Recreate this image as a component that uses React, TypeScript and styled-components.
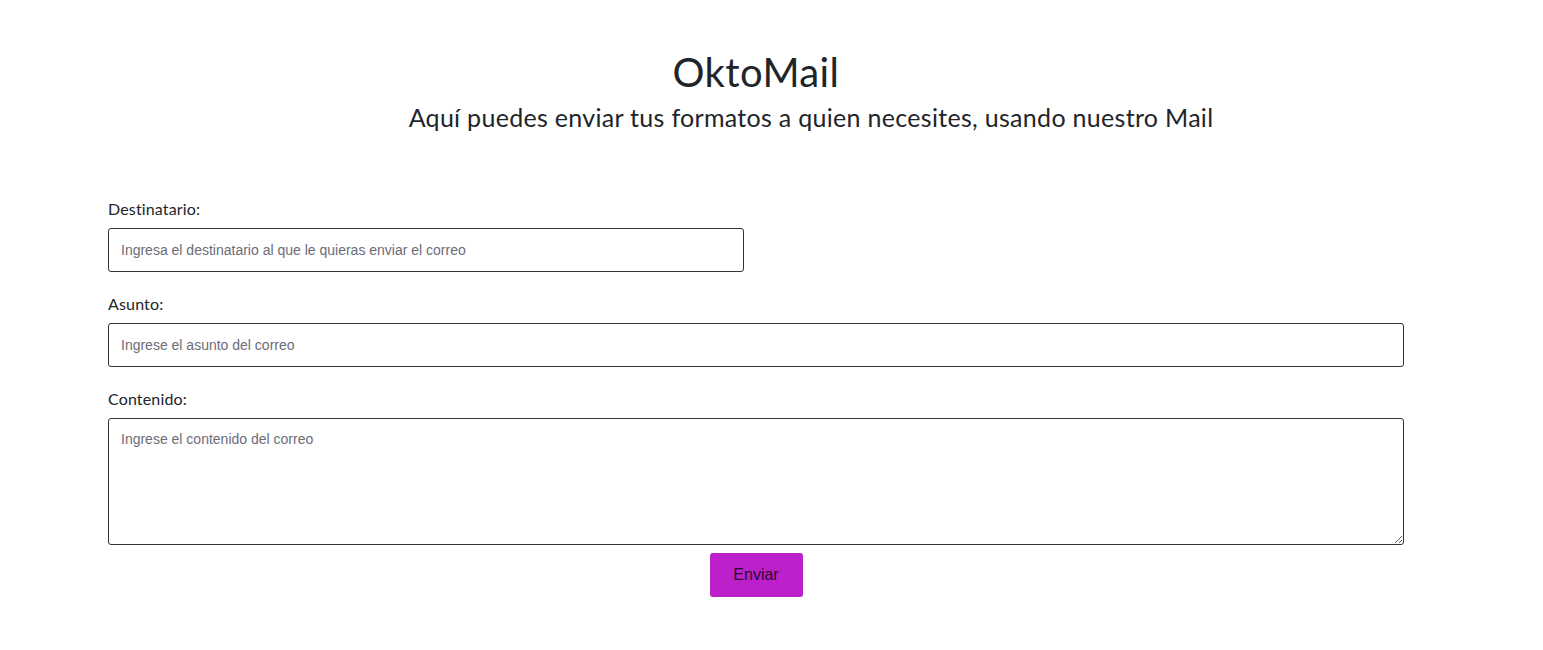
import React from "react"
import styled, { createGlobalStyle } from "styled-components"

const GlobalStyle = createGlobalStyle`
  * {
    box-sizing: border-box;
  }
  body {
    margin: 0;
    background: #ffffff;
    color: #212529;
    font-family: Lato, "Open Sans", sans-serif;
  }
`

const Page = styled.main`
  width: 1512px;
  padding-top: 48px;
`

const Header = styled.header`
  display: flex;
  flex-direction: column;
  align-items: center;
`

const Title = styled.h1`
  margin: 0;
  font-size: 40px;
  font-weight: 400;
  line-height: 48px;
  letter-spacing: 0.4px;
`

const Subtitle = styled.h3`
  margin: 3px 0 0;
  padding-left: 110px;
  font-size: 25px;
  font-weight: 400;
  line-height: 36px;
  letter-spacing: 0.3px;
`

const Form = styled.form`
  display: flex;
  flex-direction: column;
  width: 1296px;
  margin: 64px 0 0 108px;
`

const Field = styled.div`
  display: flex;
  flex-direction: column;
  margin-bottom: 22px;
`

const Label = styled.label`
  font-size: 16px;
  line-height: 20px;
  letter-spacing: 0.15px;
  margin-bottom: 9px;
`

const TextInput = styled.input<{ $short?: boolean }>`
  width: ${p => (p.$short ? "636px" : "100%")};
  height: 44px;
  padding: 0 12px;
  border: 1px solid #333333;
  border-radius: 3px;
  font-family: "Liberation Sans", Arial, sans-serif;
  font-size: 14px;
  color: #212529;
  &::placeholder {
    color: #6c6c78;
  }
`

const TextArea = styled.textarea`
  width: 100%;
  height: 127px;
  padding: 12px;
  border: 1px solid #333333;
  border-radius: 3px;
  font-family: "Liberation Sans", Arial, sans-serif;
  font-size: 14px;
  resize: vertical;
  &::placeholder {
    color: #6c6c78;
  }
`

const Actions = styled.div`
  display: flex;
  justify-content: center;
  margin-top: -14px;
`

const SendButton = styled.button`
  width: 93px;
  height: 44px;
  border: none;
  border-radius: 3px;
  background: #bb20cb;
  color: #2a0a2e;
  font-family: "Liberation Sans", Arial, sans-serif;
  font-size: 16px;
  cursor: pointer;
`

export default function App() {
  return (
    <>
      <GlobalStyle />
      <Page>
        <Header>
          <Title>OktoMail</Title>
          <Subtitle>Aquí puedes enviar tus formatos a quien necesites, usando nuestro Mail</Subtitle>
        </Header>
        <Form onSubmit={e => e.preventDefault()}>
          <Field>
            <Label htmlFor="dest">Destinatario:</Label>
            <TextInput
              id="dest"
              $short
              placeholder="Ingresa el destinatario al que le quieras enviar el correo"
            />
          </Field>
          <Field>
            <Label htmlFor="asunto">Asunto:</Label>
            <TextInput id="asunto" placeholder="Ingrese el asunto del correo" />
          </Field>
          <Field>
            <Label htmlFor="contenido">Contenido:</Label>
            <TextArea id="contenido" placeholder="Ingrese el contenido del correo" />
          </Field>
          <Actions>
            <SendButton type="submit">Enviar</SendButton>
          </Actions>
        </Form>
      </Page>
    </>
  )
}
